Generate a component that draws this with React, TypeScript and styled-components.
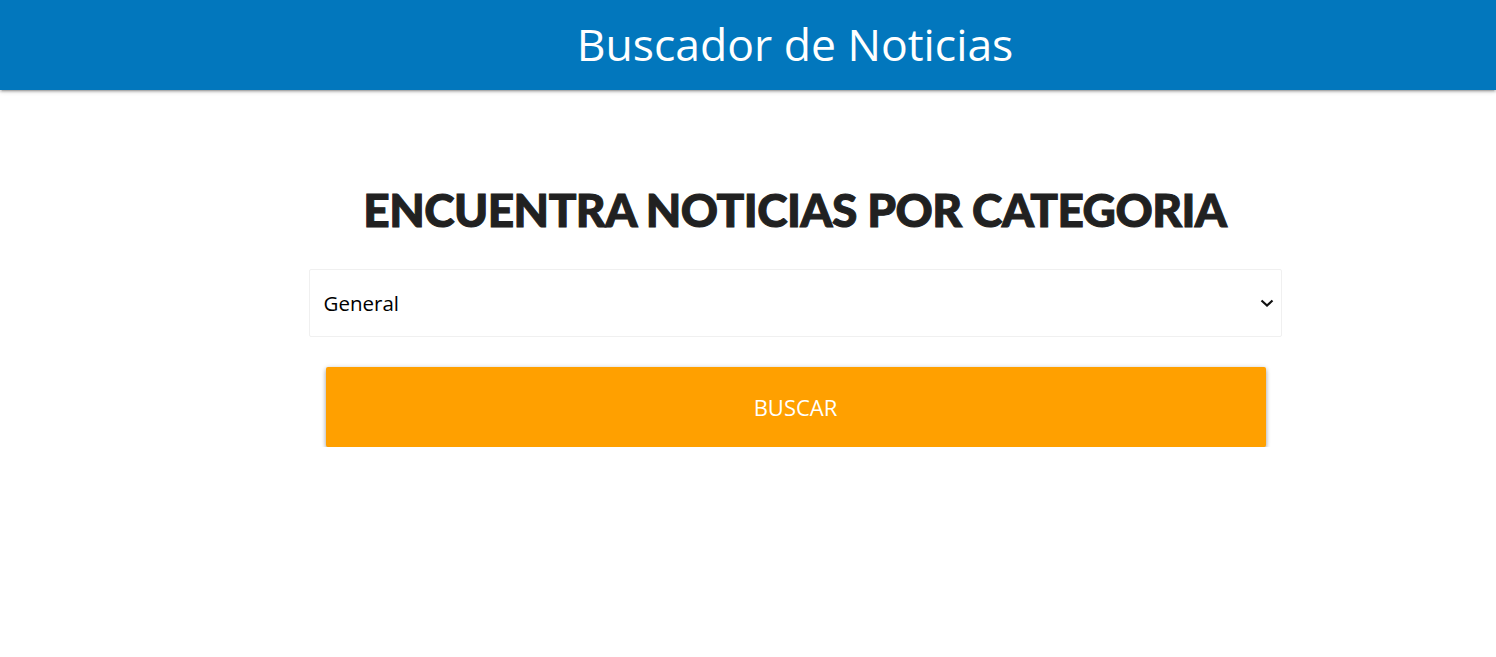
import React from "react";
import styled, { createGlobalStyle } from "styled-components";

const Global = createGlobalStyle`
  html, body { margin: 0; padding: 0; background: #fff; }
  body { font-family: "Open Sans", "Noto Sans", sans-serif; }
  * { box-sizing: border-box; }
`;

const Header = styled.header`
  height: 90px;
  background: #0277bd;
  box-shadow: 0 2px 2px 0 rgba(0,0,0,0.14), 0 3px 1px -2px rgba(0,0,0,0.12), 0 1px 5px 0 rgba(0,0,0,0.2);
  display: flex;
  align-items: center;
  justify-content: center;
  padding-left: 94px;
`;

const Brand = styled.h1`
  margin: 0;
  color: #fff;
  font-family: "Open Sans", sans-serif;
  font-weight: 400;
  font-size: 44.5px;
  line-height: 1;
  padding-bottom: 2px;
`;

const Main = styled.main`
  padding: 92px 0 0 94px;
  display: flex;
  justify-content: center;
`;

const Form = styled.form`
  width: 973px;
  display: flex;
  flex-direction: column;
  align-items: stretch;
`;

const Heading = styled.h2`
  margin: 0 0 31px;
  text-align: center;
  font-family: "Lato", "Liberation Sans", sans-serif;
  font-weight: 900;
  font-size: 46px;
  letter-spacing: -0.55px;
  line-height: 56px;
  color: #212121;
  -webkit-text-stroke: 1px #212121;
`;

const SelectBox = styled.div`
  position: relative;
  height: 68px;
  border: 1px solid #f0f0f0;
  border-radius: 2px;
  display: flex;
  align-items: center;
  padding: 0 14px;
  font-size: 20.5px;
  color: #000;
`;

const Chevron = styled.svg`
  position: absolute;
  right: 7px;
  top: 50%;
  transform: translateY(-50%);
`;

const Button = styled.button`
  margin: 30px 16px 0 17px;
  height: 80px;
  border: none;
  border-radius: 2px;
  background: #ffa000;
  color: #fff;
  font-family: "Open Sans", sans-serif;
  font-size: 22px;
  text-transform: uppercase;
  box-shadow: 0 3px 4px 0 rgba(0,0,0,0.2), 0 3px 1px -2px rgba(0,0,0,0.16), 0 1px 5px 0 rgba(0,0,0,0.24);
  cursor: pointer;
`;

export default function App() {
  return (
    <>
      <Global />
      <Header>
        <Brand>Buscador de Noticias</Brand>
      </Header>
      <Main>
        <Form onSubmit={(e) => e.preventDefault()}>
          <Heading>ENCUENTRA NOTICIAS POR CATEGORIA</Heading>
          <SelectBox>
            General
            <Chevron width="14" height="10" viewBox="0 0 14 10">
              <path d="M1.5 2.5 L7 7.5 L12.5 2.5" fill="none" stroke="#111" strokeWidth="2.2" />
            </Chevron>
          </SelectBox>
          <Button type="submit">Buscar</Button>
        </Form>
      </Main>
    </>
  );
}
